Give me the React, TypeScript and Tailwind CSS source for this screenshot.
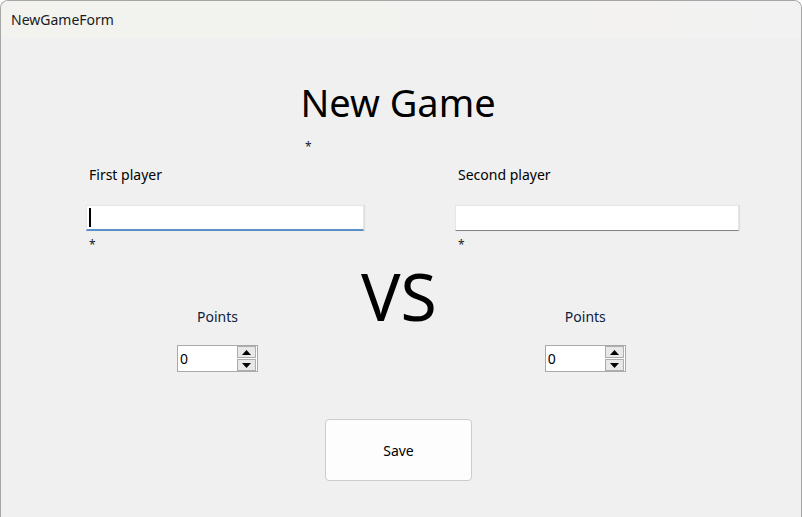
const font = { fontFamily: '"Noto Sans", "Open Sans", sans-serif' };

function Spin() {
  return (
    <div className="flex h-[27px] w-[81px] items-center border border-[#a9a9a9] bg-white">
      <span className="ml-[2px] flex-1 text-[14px] leading-none text-black">0</span>
      <div className="mr-[1px] flex flex-col gap-[1px]">
        <div className="flex h-[12px] w-[19px] items-center justify-center border border-[#adadad] bg-[#e8e8e8]">
          <svg width="9" height="5" viewBox="0 0 9 5">
            <path d="M0 5 L4.5 0 L9 5 Z" fill="#000" />
          </svg>
        </div>
        <div className="flex h-[12px] w-[19px] items-center justify-center border border-[#adadad] bg-[#e8e8e8]">
          <svg width="9" height="5" viewBox="0 0 9 5">
            <path d="M0 0 L9 0 L4.5 5 Z" fill="#000" />
          </svg>
        </div>
      </div>
    </div>
  );
}

export default function App() {
  return (
    <div className="h-[517px] w-[802px] overflow-hidden bg-white" style={font}>
      <div className="flex h-full flex-col overflow-hidden rounded-t-[8px] border border-b-0 border-[#a6a6a6]">
        <div className="flex h-[37px] items-center bg-gradient-to-r from-[#f2f3ee] to-[#f3f2f2] px-[10px]">
          <span className="text-[14px] text-[#1a1a1a]">NewGameForm</span>
        </div>
        <div className="flex flex-1 flex-col bg-[#f0f0f0]">
          <div className="flex flex-col items-center pt-[40px]">
            <h1 className="mr-[6px] text-[38px] leading-[48px] text-black">New Game</h1>
          </div>
          <div className="ml-[304px] mt-[14px] h-[14px] text-[12px] leading-[14px] text-[#202020]">*</div>

          <div className="mt-[11px] flex">
            <div className="ml-[85px] flex w-[278px] flex-col">
              <span className="ml-[3px] text-[14px] leading-[20px] text-black">First player</span>
              <div className="mt-[20px] flex h-[26px] items-center border border-b-2 border-[#e6e6e6] border-b-[#5b8fc7] bg-white shadow-[1px_0_1px_rgba(0,0,0,0.08)]">
                <div className="ml-[2px] h-[19px] w-[2px] bg-black" />
              </div>
              <span className="ml-[3px] mt-[7px] text-[12px] leading-[14px] text-[#202020]">*</span>
            </div>
            <div className="ml-[91px] flex w-[284px] flex-col">
              <span className="ml-[3px] text-[14px] leading-[20px] text-black">Second player</span>
              <div className="mt-[20px] h-[26px] border border-[#e6e6e6] border-b-[#838383] bg-white shadow-[1px_0_1px_rgba(0,0,0,0.08)]" />
              <span className="ml-[3px] mt-[7px] text-[12px] leading-[14px] text-[#202020]">*</span>
            </div>
          </div>

          <div className="mt-[3px] flex items-start">
            <div className="ml-[176px] flex w-[81px] flex-col items-center pt-[52px]">
              <span className="text-[14px] leading-[20px] text-[#0f1c3c]">Points</span>
              <div className="mt-[18px]">
                <Spin />
              </div>
            </div>
            <div className="ml-[103px] text-[66px] leading-[80px] text-black">VS</div>
            <div className="ml-[108px] flex w-[81px] flex-col items-center pt-[52px]">
              <span className="text-[14px] leading-[20px] text-[#0f1c3c]">Points</span>
              <div className="mt-[18px]">
                <Spin />
              </div>
            </div>
          </div>

          <div className="mt-[47px] ml-[324px]">
            <button className="flex h-[62px] w-[147px] items-center justify-center rounded-[4px] border border-[#cccccc] bg-[#fdfdfd] text-[14px] text-black">
              Save
            </button>
          </div>
        </div>
      </div>
    </div>
  );
}
